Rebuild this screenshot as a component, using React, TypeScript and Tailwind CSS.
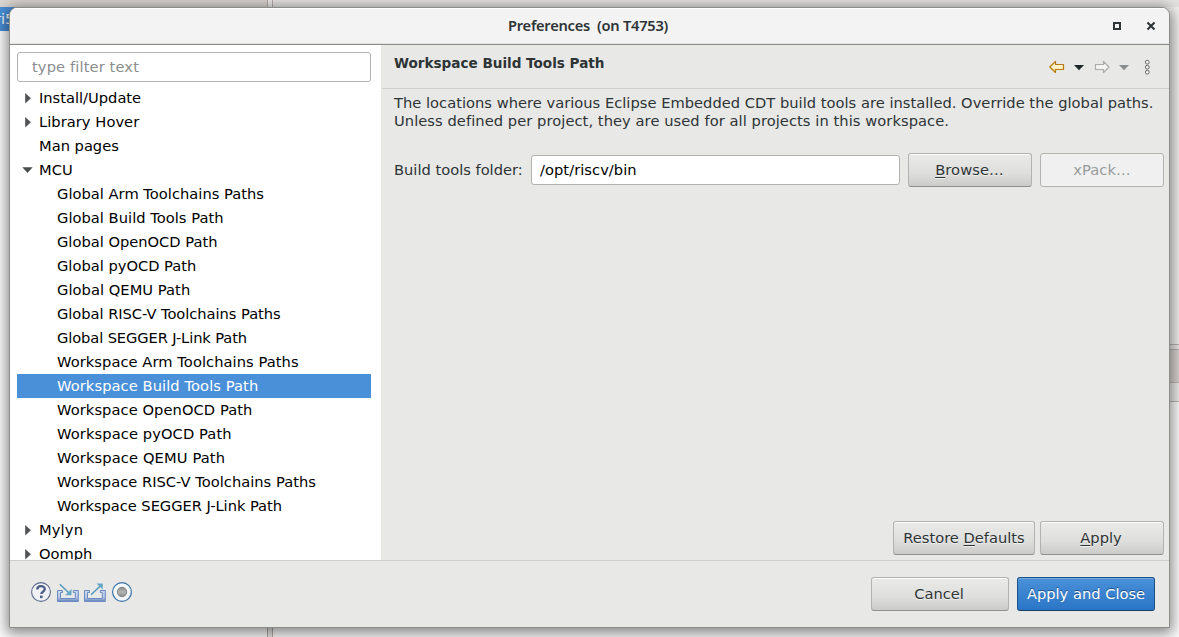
import React from "react";

type Item = { label: string; level: 0 | 1; state?: "closed" | "open"; selected?: boolean; tracking?: string };

const items: Item[] = [
  { label: "Install/Update", level: 0, state: "closed" },
  { label: "Library Hover", level: 0, state: "closed", tracking: "tracking-[0.05px]" },
  { label: "Man pages", level: 0 },
  { label: "MCU", level: 0, state: "open" },
  { label: "Global Arm Toolchains Paths", level: 1, tracking: "tracking-[0.02px]" },
  { label: "Global Build Tools Path", level: 1, tracking: "tracking-[0.03px]" },
  { label: "Global OpenOCD Path", level: 1 },
  { label: "Global pyOCD Path", level: 1 },
  { label: "Global QEMU Path", level: 1, tracking: "tracking-[0.05px]" },
  { label: "Global RISC-V Toolchains Paths", level: 1, tracking: "tracking-[-0.04px]" },
  { label: "Global SEGGER J-Link Path", level: 1, tracking: "tracking-[-0.11px]" },
  { label: "Workspace Arm Toolchains Paths", level: 1, tracking: "tracking-[0.06px]" },
  { label: "Workspace Build Tools Path", level: 1, selected: true, tracking: "tracking-[0.08px]" },
  { label: "Workspace OpenOCD Path", level: 1, tracking: "tracking-[0.07px]" },
  { label: "Workspace pyOCD Path", level: 1, tracking: "tracking-[0.1px]" },
  { label: "Workspace QEMU Path", level: 1, tracking: "tracking-[0.12px]" },
  { label: "Workspace RISC-V Toolchains Paths", level: 1, tracking: "tracking-[0.02px]" },
  { label: "Workspace SEGGER J-Link Path", level: 1, tracking: "tracking-[-0.04px]" },
  { label: "Mylyn", level: 0, state: "closed", tracking: "tracking-[0.15px]" },
  { label: "Oomph", level: 0, state: "closed" },
];

function Expander({ state }: { state?: "closed" | "open" }) {
  return (
    <svg className="h-6 w-[22px] shrink-0" viewBox="0 0 22 24">
      {state === "closed" && <path d="M8.2 7v10.4L13.9 12.2z" fill="#505354" />}
      {state === "open" && <path d="M5.3 9.3h10.4L10.5 15z" fill="#4a4d4e" />}
    </svg>
  );
}

function Tree() {
  return (
    <ul className="mt-1 flex flex-col text-black">
      {items.map((it) => (
        <li
          key={it.label}
          className={`flex h-6 shrink-0 items-center whitespace-pre leading-6 ${
            it.selected ? "bg-[#4a90d9] text-white" : ""
          }`}
        >
          {it.level === 0 ? <Expander state={it.state} /> : <span className="w-10 shrink-0" />}
          <span className={it.tracking}>{it.label}</span>
        </li>
      ))}
    </ul>
  );
}

function Button({ className, disabled, primary, children }: {
  className: string; disabled?: boolean; primary?: boolean; children: React.ReactNode;
}) {
  const look = disabled
    ? "border-[#b4b5b0] bg-[#f0f0f0] text-[#999c9d]"
    : primary
      ? "border-[#1c5187] border-b-[#173f68] bg-linear-to-b from-[#4a90d9] to-[#2a76c6] text-white shadow-[inset_0_1px_0_#76abe2] [text-shadow:0_-1px_0_#1c5187]"
      : "border-[#b2b3ae] border-b-[#8f918c] bg-linear-to-b from-[#e8e8e7] from-10% via-[#dededc] via-60% to-[#cbcbc9] text-[#2e3436] shadow-[inset_0_1px_0_#fff] [text-shadow:0_1px_0_#f0f0f0]";
  return (
    <button
      disabled={disabled}
      className={`flex h-[34px] shrink-0 items-center justify-center whitespace-nowrap rounded-[3px] border ${look} ${className}`}
    >
      {children}
    </button>
  );
}

function NavIcons() {
  return (
    <svg className="h-5 w-[108px]" viewBox="1048 57 108 20">
      <defs>
        <linearGradient id="gold" x1="0" y1="0" x2="0" y2="1">
          <stop offset="0" stopColor="#fffdf0" /><stop offset="1" stopColor="#fbe69a" />
        </linearGradient>
      </defs>
      <path d="M1049.8 67l5.7-5.5v3h8v5h-8v3z" fill="url(#gold)" stroke="#b87a0c" strokeWidth="1.2" strokeLinejoin="round" />
      <path d="M1074 65h10l-5 5.2z" fill="#1f2628" />
      <path d="M1109 67l-5.5-5.5v3h-8v5h8v3z" fill="#f3f3f2" stroke="#acacac" strokeWidth="1.2" strokeLinejoin="round" />
      <path d="M1119 65h10l-5 5.2z" fill="#8b8e8e" />
      <g fill="#f6f6f6" stroke="#666" strokeWidth="1">
        <circle cx="1147.3" cy="62.2" r="1.9" /><circle cx="1147.3" cy="67.2" r="1.9" /><circle cx="1147.3" cy="72.2" r="1.9" />
      </g>
    </svg>
  );
}

function FooterIcons() {
  return (
    <svg className="h-[22px] w-[104px]" viewBox="30 581 104 22">
      <defs>
        <linearGradient id="tray" x1="0" y1="0" x2="0" y2="1">
          <stop offset="0" stopColor="#cfdaf0" /><stop offset=".65" stopColor="#b4c5e6" /><stop offset="1" stopColor="#5f80b8" />
        </linearGradient>
        <linearGradient id="ball" x1="0" y1="0" x2="0" y2="1">
          <stop offset="0" stopColor="#8c8c8c" /><stop offset=".5" stopColor="#b4b4b4" /><stop offset="1" stopColor="#8c8c8c" />
        </linearGradient>
      </defs>
      <circle cx="41" cy="592" r="9.4" fill="#f0f2f5" stroke="#5e6b8d" strokeWidth="1.1" />
      <path d="M37.3 589.4c0-4.4 7.5-4.2 7.5-.3 0 2.6-3.5 2.6-3.5 5" fill="none" stroke="#4c5d86" strokeWidth="2.4" />
      <rect x="40" y="595.6" width="2.6" height="2.5" fill="#4c5d86" />
      {[0, 27].map((x) => (
        <path key={x} transform={`translate(${x} 0)`} d="M57.5 590.5h5v2h-2v6h14.8v-6h-2v-2h5v11H57.5z" fill="url(#tray)" stroke="#6a8ac2" strokeWidth="1" />
      ))}
      <path d="M59.8 584.2l9 8.5" fill="none" stroke="#4c97bd" strokeWidth="1.4" />
      <path d="M71.5 589v6.2h-6.3z" fill="#63a5c7" />
      <path d="M91 594.8l9-8.6" fill="none" stroke="#4c97bd" strokeWidth="1.4" />
      <path d="M96.5 583.4h6.2v6.1z" fill="#63a5c7" />
      <circle cx="122" cy="592" r="9.4" fill="#f4f7fa" stroke="#3872a8" strokeWidth="1.2" />
      <circle cx="122" cy="592" r="4.7" fill="url(#ball)" stroke="#7c7c7c" strokeWidth=".9" />
    </svg>
  );
}

function Desktop() {
  return (
    <div className="flex h-full w-full">
      <div className="flex w-[268px] flex-col border-r border-[#b3aca7] bg-white">
        <div className="h-[7px] bg-[#dad6d2]" />
        <div className="h-6 bg-[#4a90d9] leading-6 text-white">
          <span className="-ml-[5px]">ri5</span>
        </div>
      </div>
      <div className="w-[5px] border-r border-[#b3aca7] bg-[#edebe9]" />
      <div className="flex grow flex-col bg-white">
        <div className="h-[7px] bg-[#e5e4e2]" />
        <div className="h-[337px] bg-[#f4f3f2]" />
        <div className="h-[6px] border-y border-[#b9b4b0] bg-[#edebe9]" />
        <div className="h-[32px] bg-[#dad6d2]" />
        <div className="h-5 border-y border-[#c0bbb7] bg-[#f0f0ef]" />
      </div>
    </div>
  );
}

export default function App() {
  return (
    <div className="relative h-[637px] w-[1179px] overflow-hidden font-['DejaVu_Sans',sans-serif] text-[14.667px] text-[#2e3436]">
      <Desktop />
      <section className="absolute left-[9px] top-[7px] flex h-[621px] w-[1161px] flex-col overflow-hidden rounded-t-[8px] border border-[#8b8d89] bg-[#e8e8e7] shadow-[0_3px_14px_3px_rgba(0,0,0,0.46)]">
        <header className="flex h-[37px] shrink-0 items-center border-b border-[#8b8d89] bg-[#f3f3f3] shadow-[inset_0_1px_0_#fff,inset_0_-1px_0_#e2e2e1]">
          <h1 className="-mt-[2px] ml-[498px] whitespace-pre font-['Noto_Sans',sans-serif] text-[14.667px] font-semibold tracking-[-0.26px]">Preferences  (on T4753)</h1>
          <svg className="ml-auto mr-[10px] h-4 w-12" viewBox="1111 18 48 16">
            <rect x="1114" y="23" width="6" height="6" fill="none" stroke="#2e3436" strokeWidth="2" />
            <path d="M1147.5 22.5l7 7m0-7l-7 7" stroke="#2e3436" strokeWidth="2.1" />
          </svg>
        </header>
        <div className="flex min-h-0 grow">
          <nav className="w-[371px] shrink-0 overflow-hidden bg-white px-[7px] pr-[10px] pt-[7px]">
            <div className="flex h-[30px] items-center rounded-[3px] border border-[#b2b3ae] pl-[14px] tracking-[0.12px] text-[#8b8e8f]">type filter text</div>
            <Tree />
          </nav>
          <main className="flex grow flex-col">
            <div className="ml-px flex h-11 shrink-0 justify-between border-b border-[#cfcfcd] pl-3 pr-[13px]">
              <h2 className="pt-[9px] text-[13.6px] font-bold leading-[18px] tracking-[-0.02px]">Workspace Build Tools Path</h2>
              <div className="pt-3"><NavIcons /></div>
            </div>
            <p className="whitespace-nowrap pl-[13px] pt-[5px] leading-[18px]">
              <span className="tracking-[0.02px]">The locations where various Eclipse Embedded CDT build tools are installed. Override the global paths.</span><br />
              <span className="tracking-[0.065px]">Unless defined per project, they are used for all projects in this workspace.</span>
            </p>
            <div className="mt-[23px] flex items-center pl-[13px]">
              <label className="w-[137px] shrink-0 whitespace-nowrap">Build tools folder:</label>
              <div className="flex h-[30px] w-[369px] items-center rounded-[3px] border border-[#b2b3ae] bg-white pl-2 tracking-[0.05px] text-black">/opt/riscv/bin</div>
              <Button className="ml-2 w-[124px] pr-[1px] tracking-[0.1px]"><span><u className="underline-offset-2">B</u>rowse…</span></Button>
              <Button disabled className="ml-2 w-[124px] tracking-[0.1px]">xPack…</Button>
            </div>
            <div className="mb-[5px] mr-[5px] mt-auto flex justify-end gap-[5px]">
              <Button className="w-[142px]"><span>Restore <u className="underline-offset-2">D</u>efaults</span></Button>
              <Button className="w-[124px] pr-[2px]"><span><u className="underline-offset-2">A</u>pply</span></Button>
            </div>
          </main>
        </div>
        <footer className="flex h-[67px] shrink-0 items-center justify-between border-t border-[#cfcfcd] pl-5 pr-[14px]">
          <div className="-mt-1"><FooterIcons /></div>
          <div className="flex gap-2">
            <Button className="w-[138px] pr-[2px]">Cancel</Button>
            <Button primary className="w-[138px]">Apply and Close</Button>
          </div>
        </footer>
      </section>
    </div>
  );
}
